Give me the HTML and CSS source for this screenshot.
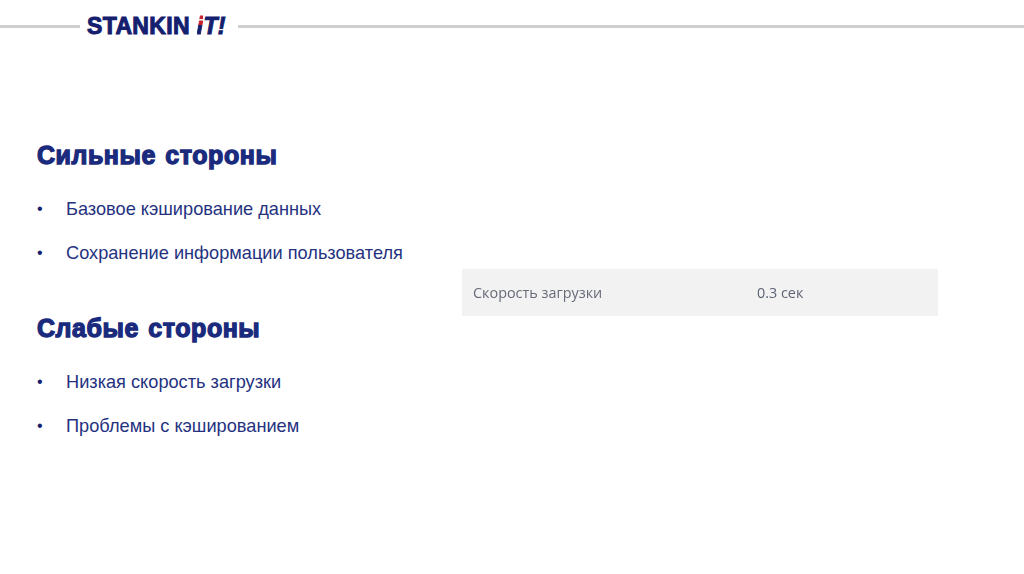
FILE: index.html
```html
<!DOCTYPE html>
<html lang="ru">
<head>
<meta charset="utf-8">
<title>Stankin iT!</title>
<link rel="stylesheet" href="styles.css">
</head>
<body>
<header class="top">
  <span class="rule rule-left"></span>
  <span class="logo">STANKIN <em class="logo-it"><span class="logo-i">i</span>T!</em></span>
  <span class="rule rule-right"></span>
</header>
<main class="content">
  <section class="points">
    <h2 class="heading">Сильные стороны</h2>
    <ul class="list">
      <li>Базовое кэширование данных</li>
      <li>Сохранение информации пользователя</li>
    </ul>
    <h2 class="heading heading-weak">Слабые стороны</h2>
    <ul class="list">
      <li>Низкая скорость загрузки</li>
      <li>Проблемы с кэшированием</li>
    </ul>
  </section>
  <aside class="metric">
    <span class="metric-name">Скорость загрузки</span>
    <span class="metric-value">0.3 сек</span>
  </aside>
</main>
</body>
</html>
```

FILE: styles.css
```css
* { box-sizing: border-box; }
html, body { margin: 0; padding: 0; }
body {
  width: 1024px;
  height: 574px;
  overflow: hidden;
  background: #fff;
  font-family: "Liberation Sans", Arial, sans-serif;
  color: #1b2a78;
}
.top {
  display: flex;
  align-items: center;
  height: 26px;
  margin-top: 13px;
}
.rule { height: 3px; background: #cfcfcf; display: block; }
.rule-left { width: 80px; }
.rule-right { flex: 1; }
.logo {
  width: 158px;
  padding-left: 7px;
  font-size: 23px;
  font-weight: 700;
  white-space: nowrap;
  color: #14206e;
  -webkit-text-stroke: 1px #14206e;
  letter-spacing: 0.35px;
  word-spacing: 0;
}
.logo-it { color: #14206e; font-style: italic; }
.logo-i {
  background: linear-gradient(#c8202c 0 46%, #14206e 46%);
  -webkit-background-clip: text;
  background-clip: text;
  color: transparent;
  -webkit-text-stroke: 1px transparent;
}
.content {
  display: flex;
  padding-left: 37px;
}
.points { width: 425px; padding-top: 101px; }
.heading {
  margin: 0;
  font-size: 25px;
  line-height: 30px;
  font-weight: 700;
  color: #1a2a7c;
  letter-spacing: 0.55px;
  word-spacing: 2px;
  -webkit-text-stroke: 1.3px #1a2a7c;
}
.heading-weak { margin-top: 50px; }
.list { list-style: none; margin: 29px 0 0; padding: 0; }
.list li {
  position: relative;
  padding-left: 29px;
  font-size: 18.2px;
  line-height: 20px;
  margin-bottom: 24px;
  color: #25327f;
}
.list li:last-child { margin-bottom: 0; }
.list li::before {
  content: "•";
  position: absolute;
  left: 0;
  top: 0;
  font-size: 16px;
  color: #14206e;
}
.metric {
  display: flex;
  align-items: center;
  width: 476px;
  height: 47px;
  margin-top: 230px;
  padding-left: 11px;
  background: #f2f2f2;
  color: #666b78;
  font-family: "Open Sans", sans-serif;
  font-size: 14.4px;
  filter: blur(0.7px);
}
.metric-name { width: 284px; }
.metric-value { color: #5c6274; }
```
